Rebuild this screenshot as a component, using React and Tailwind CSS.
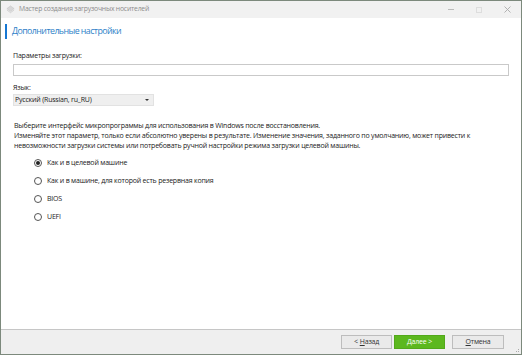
import { useState } from "react";

const options = [
  "Как и в целевой машине",
  "Как и в машине, для которой есть резервная копия",
  "BIOS",
  "UEFI",
];

function Radio({ checked, label, onClick }) {
  return (
    <div className="flex items-center gap-[5px] h-[18px] cursor-default" onClick={onClick}>
      <span className="w-[8px] h-[8px] rounded-full border border-[#555] bg-white flex items-center justify-center">
        {checked && <span className="w-[4px] h-[4px] rounded-full bg-[#222]" />}
      </span>
      <span>{label}</span>
    </div>
  );
}

export default function App() {
  const [mode, setMode] = useState(0);

  return (
    <div
      className="w-[522px] h-[355px] flex flex-col bg-white border border-[#7c897c] text-[7px] tracking-[-0.2px] text-[#1a1a1a] overflow-hidden"
      style={{ fontFamily: '"Open Sans", "Noto Sans", sans-serif' }}
    >
      {/* title bar */}
      <div className="h-[17px] bg-[#f1f1f1] flex items-center shrink-0">
        <svg width="9" height="9" viewBox="0 0 10 10" className="ml-[5px]">
          <path d="M5 1 L9 4 L5 7 L1 4 Z" fill="#d8d8d8" stroke="#c4c4c4" strokeWidth="0.6" />
          <path d="M1 5.5 L5 8.5 L9 5.5" fill="none" stroke="#c4c4c4" strokeWidth="0.8" />
        </svg>
        <span className="ml-[4px] text-[#8c8c8c] text-[6.8px]">Мастер создания загрузочных носителей</span>
        <div className="ml-auto flex items-center h-full">
          <span className="w-[28px] flex justify-center">
            <span className="w-[6px] h-px bg-[#bbb]" />
          </span>
          <span className="w-[28px] flex justify-center">
            <span className="w-[6px] h-[6px] border border-[#ddd]" />
          </span>
          <span className="w-[28px] flex justify-center">
            <svg width="7" height="7" viewBox="0 0 7 7">
              <path d="M0.5 0.5 L6.5 6.5 M6.5 0.5 L0.5 6.5" stroke="#aaa" strokeWidth="0.9" />
            </svg>
          </span>
        </div>
      </div>

      {/* body */}
      <div className="flex-1 flex flex-col">
        <div className="flex items-center mt-[6px] h-[15px]">
          <span className="w-[2px] h-[15px] bg-[#1677d2] ml-[4px]" />
          <span className="ml-[5px] text-[8.8px] tracking-[-0.55px] text-[#2e7fc8]">Дополнительные настройки</span>
        </div>

        <div className="px-[12px] mt-[11px]">
          <div className="h-[11px] leading-[11px]">Параметры загрузки:</div>
          <div className="mt-[3px] h-[12px] w-[496px] border border-[#c9c9c9] bg-white" />

          <div className="mt-[6px] h-[11px] leading-[11px]">Язык:</div>
          <div className="mt-px h-[12px] w-[141px] bg-[#efefef] border border-[#e2e2e2] flex items-center pl-[1px] pr-[4px]">
            <span>Русский (Russian, ru_RU)</span>
            <span className="ml-auto w-0 h-0 border-l-[2px] border-r-[2px] border-t-[2px] border-l-transparent border-r-transparent border-t-[#333]" />
          </div>

          <div className="mt-[15px] leading-[10px] pl-[1px]">
            <div>Выберите интерфейс микропрограммы для использования в Windows после восстановления.</div>
            <div>
              Изменяйте этот параметр, только если абсолютно уверены в результате. Изменение значения, заданного по умолчанию, может привести к
            </div>
            <div>невозможности загрузки системы или потребовать ручной настройки режима загрузки целевой машины.</div>
          </div>

          <div className="mt-[3px] pl-[21px] flex flex-col">
            {options.map((o, i) => (
              <Radio key={o} label={o} checked={mode === i} onClick={() => setMode(i)} />
            ))}
          </div>
        </div>
      </div>

      {/* footer */}
      <div className="h-[25px] shrink-0 bg-[#efefef] border-t border-[#c6c6c6] flex items-center justify-end pr-[17px] relative">
        <button className="w-[51px] h-[14px] border border-[#bdbdbd] bg-[#eaeaea] text-[#333] flex items-center justify-center">
          &lt; <span className="underline ml-[2px]">Н</span>азад
        </button>
        <button className="ml-[2px] w-[51px] h-[14px] bg-[#5cb81e] border border-[#52a81a] text-white flex items-center justify-center">
          <span className="underline">Д</span>алее &gt;
        </button>
        <button className="ml-[7px] w-[52px] h-[14px] border border-[#bdbdbd] bg-[#eaeaea] text-[#333] flex items-center justify-center">
          <span className="underline">О</span>тмена
        </button>
        <svg width="5" height="5" viewBox="0 0 5 5" className="absolute right-[1px] bottom-[1px]">
          <rect x="3" y="3" width="1" height="1" fill="#aaa" />
          <rect x="1" y="3" width="1" height="1" fill="#aaa" />
          <rect x="3" y="1" width="1" height="1" fill="#aaa" />
        </svg>
      </div>
    </div>
  );
}
